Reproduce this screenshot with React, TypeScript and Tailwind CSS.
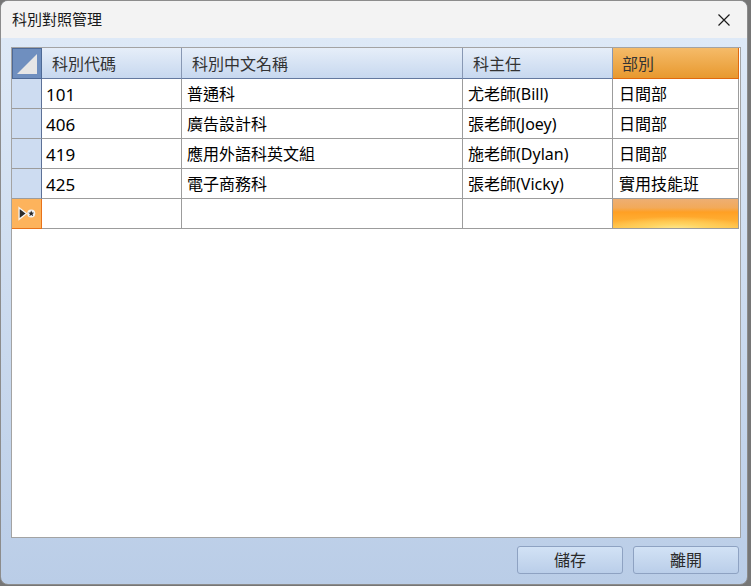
const rows = [
  ["101", "普通科", "尤老師(Bill)", "日間部"],
  ["406", "廣告設計科", "張老師(Joey)", "日間部"],
  ["419", "應用外語科英文組", "施老師(Dylan)", "日間部"],
  ["425", "電子商務科", "張老師(Vicky)", "實用技能班"],
]

const headers = ["科別代碼", "科別中文名稱", "科主任"]

function NewRowIcon() {
  return (
    <svg width="18" height="15" viewBox="0 0 17 14">
      <polygon points="1,1.5 8,7 1,12.5" fill="#2b2b2b" stroke="#f6f6f6" strokeWidth="1.2" />
      <circle cx="12.5" cy="7" r="3.8" fill="#f4f4f4" />
      <polygon
        points="12.5,4.2 13.3,6.1 15.3,6.2 13.7,7.5 14.3,9.5 12.5,8.3 10.7,9.5 11.3,7.5 9.7,6.2 11.7,6.1"
        fill="#2b2b2b"
      />
    </svg>
  )
}

export default function App() {
  return (
    <div className="w-[751px] h-[586px] bg-[#767676] font-['Noto_Sans','Noto_Sans_CJK_TC',sans-serif]">
      <div className="w-[748px] h-[585px] rounded-[8px] overflow-hidden flex flex-col border border-[#8c8c8c] bg-[linear-gradient(to_bottom,#e0ebf8,#bacde7)]">
        {/* Title bar */}
        <div className="h-[37px] shrink-0 bg-[#f3f3f3] flex items-center justify-between pl-[11px] pr-[16px]">
          <span className="text-[15px] text-[#1a1a1a] leading-none">科別對照管理</span>
          <svg width="14" height="14" viewBox="0 0 14 14" className="mt-[1px]">
            <path d="M1.5 1.5 L12.5 12.5 M12.5 1.5 L1.5 12.5" stroke="#1a1a1a" strokeWidth="1.2" />
          </svg>
        </div>

        {/* Body */}
        <div className="flex-1 pt-[9px] pl-[10px] pr-[6px]">
          {/* Grid */}
          <div className="h-[491px] bg-white border border-[#a3a3a3] text-[16px] leading-none">
            <div className="grid grid-cols-[30px_140px_281px_150px_126px] h-[31px]">
              <div className="bg-[#6f8fbf] border border-[#4d6996] flex items-end justify-end p-[4px]">
                <svg width="20" height="20" viewBox="0 0 20 20">
                  <polygon points="0,20 20,0 20,20" fill="#e6e6e6" />
                </svg>
              </div>
              {headers.map((h) => (
                <div
                  key={h}
                  className="bg-[linear-gradient(to_bottom,#e6eef9,#c7d8ef)] border-r border-r-[#8797b3] border-b border-b-[#64799f] flex items-center pl-[10px] pt-[2px] text-[#333]"
                >
                  {h}
                </div>
              ))}
              <div className="bg-[linear-gradient(to_bottom,#f5bb69,#e8992f)] border-b border-b-[#e0680e] border-r border-r-[#e0680e] flex items-center pl-[9px] pt-[2px] text-[#333]">
                部別
              </div>
            </div>

            {rows.map((r) => (
              <div key={r[0]} className="grid grid-cols-[30px_140px_281px_150px_126px] h-[30px]">
                <div className="bg-[#cddcf1] border-r border-r-[#5d7197] border-b border-b-[#9c9c9c]" />
                <div className="border-r border-b border-[#9c9c9c] flex items-center pl-[4px] pt-[1px] text-[17px] text-black">
                  {r[0]}
                </div>
                <div className="border-r border-b border-[#9c9c9c] flex items-center pl-[5px] pt-[1px] text-black">{r[1]}</div>
                <div className="border-r border-b border-[#9c9c9c] flex items-center pl-[5px] pt-[1px] text-black">{r[2]}</div>
                <div className="border-r border-b border-[#9c9c9c] flex items-center pl-[6px] pt-[1px] text-black">{r[3]}</div>
              </div>
            ))}

            {/* New row */}
            <div className="grid grid-cols-[30px_140px_281px_150px_126px] h-[30px]">
              <div className="bg-[#fdb35c] border-r border-b border-[#e8721a] flex items-center justify-center">
                <NewRowIcon />
              </div>
              <div className="border-r border-b border-[#9c9c9c]" />
              <div className="border-r border-b border-[#9c9c9c]" />
              <div className="border-r border-b border-[#9c9c9c]" />
              <div className="border-r border-b border-[#9c9c9c] bg-[radial-gradient(ellipse_60%_45%_at_50%_105%,#fdea92_0%,#ffd25e_45%,rgba(255,180,60,0)_100%),linear-gradient(to_bottom,#eeae72_0%,#f2aa5a_30%,#ffa024_45%,#ffac30_70%,#ffc24a_100%)]" />
            </div>
          </div>

          {/* Buttons */}
          <div className="flex justify-end gap-[10px] mt-[8px] pr-[2px]">
            {["儲存", "離開"].map((b) => (
              <button
                key={b}
                className="w-[106px] h-[28px] rounded-[3px] border border-[#8ea2c2] bg-[linear-gradient(to_bottom,#d2e2f5,#bacee9)] text-[16px] text-[#2a2a2a] leading-none"
              >
                {b}
              </button>
            ))}
          </div>
        </div>
      </div>
    </div>
  )
}
